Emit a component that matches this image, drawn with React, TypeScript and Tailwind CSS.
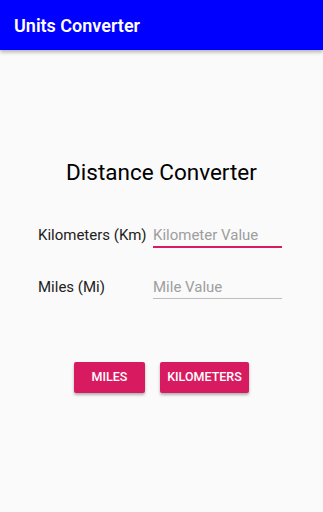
import React from 'react';

export default function App() {
  return (
    <div className="w-[323px] h-[512px] bg-[#fafafa] font-['Roboto',sans-serif] overflow-hidden">
      <div className="h-[50px] bg-[#0000ff] flex items-center pl-[14px] shadow-[0_2px_4px_rgba(0,0,0,0.3)] relative">
        <span className="text-white text-[18px] font-semibold">Units Converter</span>
      </div>

      <div className="pt-[109px] flex flex-col">
        <div className="text-center text-[22.5px] text-black leading-[26px]">Distance Converter</div>

        <div className="mt-[39px] flex items-baseline pl-[38px]">
          <div className="w-[115px] text-[15px] leading-[23px] text-[#212121]">Kilometers (Km)</div>
          <div className="w-[129px] border-b-2 border-[#d81b60] text-[15px] leading-[22px] text-[#9e9e9e]">Kilometer Value</div>
        </div>

        <div className="mt-[28px] flex items-baseline pl-[38px]">
          <div className="w-[115px] text-[15px] leading-[23px] text-[#212121]">Miles (Mi)</div>
          <div className="w-[129px] border-b border-[#bdbdbd] text-[15px] leading-[22px] text-[#9e9e9e]">Mile Value</div>
        </div>

        <div className="mt-[63px] flex pl-[74px] gap-[15px]">
          <button className="w-[71px] h-[31px] bg-[#d81b60] text-white text-[12.5px] font-medium rounded-[2px] shadow-[0_2px_3px_rgba(0,0,0,0.3)]">MILES</button>
          <button className="w-[89px] h-[31px] bg-[#d81b60] text-white text-[12.5px] font-medium rounded-[2px] shadow-[0_2px_3px_rgba(0,0,0,0.3)]">KILOMETERS</button>
        </div>
      </div>
    </div>
  );
}
